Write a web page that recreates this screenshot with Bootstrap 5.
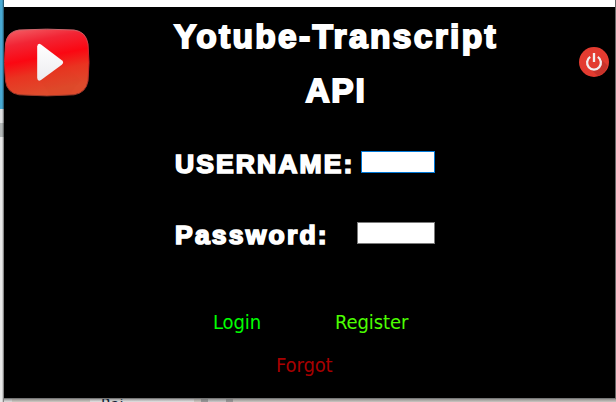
<!DOCTYPE html>
<html lang="en">
<head>
<meta charset="utf-8">
<meta name="viewport" content="width=device-width, initial-scale=1">
<title>Yotube-Transcript API</title>
<link href="https://cdn.jsdelivr.net/npm/bootstrap@5.3.0/dist/css/bootstrap.min.css" rel="stylesheet">
<style>
body{width:616px;height:402px;background:#d6d3d0}
.desk-left{width:4px;background:linear-gradient(90deg,transparent 2px,rgba(0,0,0,.25) 3px,rgba(0,0,0,.6)),linear-gradient(#48a9d3 109px,#e0e1e2 109px 123px,#b4b8b8 123px 137px,#e8e8e8 137px)}
.window-box{height:399px;background:#000;border-right:1px solid #666;border-bottom:1px solid #777}
.titlebar{height:7px;background:#fff}
.desk-bottom{height:3px;padding-left:12px;background:linear-gradient(rgba(110,110,110,.6),transparent 3px),linear-gradient(90deg,#e0e0e0 8px,#d0cbc4 8px 86px,#e5e5e5 86px 190px,#d0cbc4 190px 197px,#999 197px 204px,#ccc 204px 222px,#999 222px 229px,#cbc7c2 229px)}
.peek{font:16px/16px "DejaVu Sans Condensed",sans-serif;color:#123;margin-left:85px;margin-top:-2px}
.side-logo{width:170px;padding-top:21px}
.main-col{width:324px}
.black-face{font-family:"Liberation Sans",Arial,sans-serif;font-weight:700;color:#fff;white-space:nowrap;-webkit-text-stroke:1.9px #fff}
.title-text{font-size:33.5px;line-height:54px;margin:3px -6px 0}
.t1{letter-spacing:2.35px}
.t2{letter-spacing:1.8px}
.field-row{height:24px}
.row-user{margin-top:32px}
.row-pass{margin-top:47px}
.field-row label{font-size:26.5px;line-height:24px;padding-top:3px;-webkit-text-stroke-width:1.7px}
.l-user{width:187px;letter-spacing:2.1px;padding-left:1px}
.l-pass{width:183px;letter-spacing:2.2px;padding-left:1px}
.plain-input{height:22px;border:1px solid #7a7a7a;background:#fff;padding:0;outline:0}
.in-user{width:74px;border-color:#0078d7}
.in-pass{width:78px}
.link-text{font:20px/24px "DejaVu Sans Condensed","DejaVu Sans",sans-serif;letter-spacing:-.1px;border:0;background:none;padding:0;white-space:nowrap}
.links-row{margin-top:65px;padding-left:39px}
.b-login{color:#0f0;width:122px}
.b-register{color:#4cff00}
.b-forgot{color:#a80000;margin:19px 0 0 102px;display:block}
.side-power{padding:40px 0 0 81px}
</style>
<script src="https://cdn.jsdelivr.net/npm/bootstrap@5.3.0/dist/js/bootstrap.bundle.min.js"></script>
</head>
<body class="overflow-hidden d-flex">
<div class="desk-left h-100 flex-shrink-0"></div>
<div class="flex-grow-1 overflow-hidden">
  <main class="window-box">
    <div class="titlebar"></div>
    <div class="d-flex">
      <div class="side-logo flex-shrink-0">
        <svg class="d-block" width="87" height="70" viewBox="0 0 87 70" aria-label="Play">
          <defs>
            <linearGradient id="red" x1="0" y1="0" x2=".25" y2="1"><stop offset="0" stop-color="#f3646a"/><stop offset=".25" stop-color="#f22535"/><stop offset=".5" stop-color="#fb0712"/><stop offset=".72" stop-color="#e93421"/><stop offset="1" stop-color="#df4b2c"/></linearGradient>
            <linearGradient id="rim" x1="0" y1="0" x2="0" y2="1"><stop offset="0" stop-color="#c9666c"/><stop offset=".4" stop-color="#d51c25"/><stop offset="1" stop-color="#983829"/></linearGradient>
            <linearGradient id="tri" x1="0" y1="0" x2="0" y2="1"><stop offset="0" stop-color="#fff"/><stop offset="1" stop-color="#ececf0"/></linearGradient>
          </defs>
          <path d="M15 2Q43 .3 70 2Q82 3.500 84 16Q86 34.500 84 53Q82 65 70 66.800Q43 69 15 66.800Q3 65 1.500 53Q-.5 34.500 1.500 16Q3 3.500 15 2Z" fill="url(#red)" stroke="url(#rim)"/>
          <path d="M36 52L59 37L77 52L66 66Q56 67 46 67Z" fill="#d34125" opacity=".12"/>
          <path d="M33.200 18.500Q33.700 14.500 37 16.500L57.800 32.300Q60.500 34.500 57.800 36.700L37 52Q33.700 54 33.200 50Z" fill="url(#tri)"/>
        </svg>
      </div>
      <div class="main-col flex-shrink-0">
        <h1 class="title-text black-face text-center"><span class="t1">Yotube-Transcript</span><br><span class="t2">API</span></h1>
        <form>
          <div class="field-row row-user d-flex align-items-center">
            <label class="l-user black-face" for="u">USERNAME:</label><input id="u" class="plain-input in-user" type="text">
          </div>
          <div class="field-row row-pass d-flex align-items-center">
            <label class="l-pass black-face" for="p">Password:</label><input id="p" class="plain-input in-pass" type="password">
          </div>
          <div class="links-row d-flex">
            <button type="button" class="link-text b-login text-start">Login</button><button type="button" class="link-text b-register">Register</button>
          </div>
          <button type="button" class="link-text b-forgot">Forgot</button>
        </form>
      </div>
      <div class="side-power flex-shrink-0">
        <svg class="d-block" width="30" height="30" viewBox="0 0 30 30" aria-label="Power">
          <circle cx="15" cy="15" r="15" fill="#e33b30"/>
          <path d="M20 10L28.500 18.500A14 14 0 0 1 19 29L10 20.500Z" fill="#c7332b"/>
          <circle cx="15" cy="15.500" r="6" fill="#e33b30"/>
          <path d="M11.200 9.900A6.900 6.900 0 1 0 18.800 9.900" fill="none" stroke="#f3eeee" stroke-width="2.300"/>
          <path d="M15 6V15" stroke="#f3eeee" stroke-width="2.300"/>
        </svg>
      </div>
    </div>
  </main>
  <div class="desk-bottom overflow-hidden"><div class="peek">Rai</div></div>
</div>
</body>
</html>
